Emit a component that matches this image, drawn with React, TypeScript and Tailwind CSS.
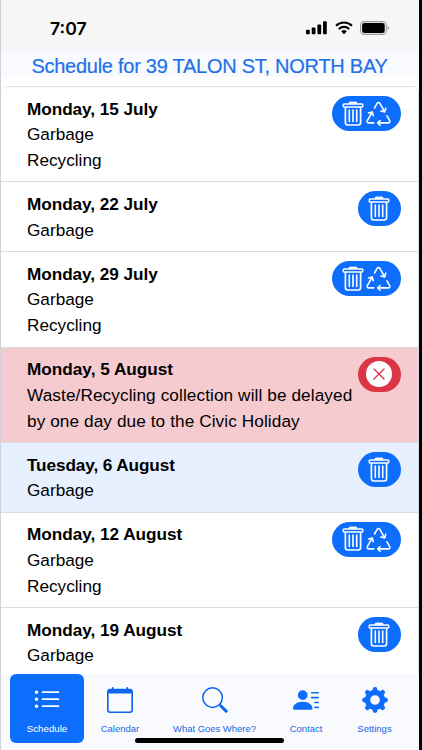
import { BsCalendar, BsListUl, BsPersonLinesFill, BsRecycle } from "react-icons/bs";

type Kind = "garbage" | "both" | "notice";
type Row = { date: string; lines: string[]; kind: Kind; bg: string; dateTrack: string; lineTrack: string };

const rows: Row[] = [
  { date: "Monday, 15 July", lines: ["Garbage", "Recycling"], kind: "both", bg: "bg-white", dateTrack: "tracking-[-0.05px]", lineTrack: "" },
  { date: "Monday, 22 July", lines: ["Garbage"], kind: "garbage", bg: "bg-white", dateTrack: "tracking-[-0.05px]", lineTrack: "" },
  { date: "Monday, 29 July", lines: ["Garbage", "Recycling"], kind: "both", bg: "bg-white", dateTrack: "tracking-[-0.05px]", lineTrack: "" },
  {
    date: "Monday, 5 August",
    lines: ["Waste/Recycling collection will be delayed", "by one day due to the Civic Holiday"],
    kind: "notice",
    bg: "bg-[#f5cbd0]",
    dateTrack: "",
    lineTrack: "tracking-[0.095px]",
  },
  { date: "Tuesday, 6 August", lines: ["Garbage"], kind: "garbage", bg: "bg-[#e6f0ff]", dateTrack: "tracking-[-0.11px]", lineTrack: "" },
  { date: "Monday, 12 August", lines: ["Garbage", "Recycling"], kind: "both", bg: "bg-white", dateTrack: "tracking-[-0.03px]", lineTrack: "" },
  { date: "Monday, 19 August", lines: ["Garbage"], kind: "garbage", bg: "bg-white", dateTrack: "tracking-[-0.03px]", lineTrack: "" },
];

function Trash() {
  return (
    <svg width="22" height="26" viewBox="0 0 22 26" fill="none" stroke="white" className="shrink-0">
      <rect x="1.2" y="2.9" width="19.6" height="3" rx="1" strokeWidth="1.5" />
      <path d="M7 2.6V2Q7 1 8 1h6q1 0 1 1v.6Z" fill="white" strokeWidth="0.8" />
      <path d="M3.4 6v15.6q0 2.4 2.4 2.4h10.4q2.4 0 2.4-2.4V6" strokeWidth="1.7" />
      <path d="M7.3 9v11.5M11 9v11.5M14.7 9v11.5" strokeWidth="1.6" strokeLinecap="round" />
    </svg>
  );
}

function Gear() {
  return (
    <svg width="26" height="26" viewBox="-13 -13 26 26" fill="none" stroke="currentColor">
      <circle r="7.5" strokeWidth="5.4" />
      <path
        d="M0-9V-10.5M0 9V10.5M-9 0H-10.5M9 0H10.5M6.4 6.4l1.2 1.2M-6.4-6.4l-1.2-1.2M6.4-6.4l1.2-1.2M-6.4 6.4l-1.2 1.2"
        strokeWidth="4.8"
        strokeLinecap="round"
      />
    </svg>
  );
}

function Magnifier() {
  return (
    <svg width="26" height="26" viewBox="0 0 26 26" fill="none" stroke="currentColor" strokeLinecap="round">
      <circle cx="10.6" cy="10.6" r="9.8" strokeWidth="1.5" />
      <path d="M17.8 17.8l1.8 1.8" strokeWidth="1.8" />
      <path d="M19.2 19.2l5 5" strokeWidth="3" />
    </svg>
  );
}

function Badge({ kind }: { kind: Kind }) {
  if (kind === "notice") {
    return (
      <div className="flex h-[35px] w-[43px] shrink-0 items-center justify-center rounded-full bg-[#dc3545]">
        <div className="flex size-[26px] items-center justify-center rounded-full bg-white text-[#dc3545]">
          <svg width="12" height="12" viewBox="0 0 12 12" stroke="currentColor" strokeWidth="1.4" strokeLinecap="round">
            <path d="M1 1l10 10M11 1L1 11" />
          </svg>
        </div>
      </div>
    );
  }
  return (
    <div
      className={`flex h-[35px] shrink-0 items-center rounded-full bg-[#0d6efd] pl-[10.5px] text-white ${
        kind === "both" ? "w-[69px] gap-[2px]" : "w-[43px]"
      }`}
    >
      <Trash />
      {kind === "both" && <BsRecycle className="size-[25px]" />}
    </div>
  );
}

function StatusBar() {
  return (
    <div className="flex h-[50px] shrink-0 items-center justify-between bg-[#f6f6f6] pr-[29px] pl-[49px]">
      <span className="mt-[7px] font-['Inter',sans-serif] text-[17.7px] leading-6 font-semibold">7:07</span>
      <div className="mt-[6px] flex items-center gap-[7px]">
        <svg width="23" height="14" viewBox="0 0 23 14" fill="black">
          <rect x="1" y="8.7" width="3.8" height="4.5" rx="1" />
          <rect x="6.7" y="6.5" width="3.8" height="6.7" rx="1" />
          <rect x="12.4" y="3.5" width="3.8" height="9.7" rx="1" />
          <rect x="18" y="0.3" width="3.8" height="12.9" rx="1" />
        </svg>
        <svg width="18" height="14" viewBox="0 0 18 14" fill="none" stroke="black" strokeWidth="2.1">
          <path d="M1 4.8a11.5 11.5 0 0 1 16 0M3.8 8a7.5 7.5 0 0 1 10.4 0" />
          <path d="M6.2 10.3a4.2 4.2 0 0 1 5.6 0L9 13.3Z" fill="black" stroke="none" />
        </svg>
        <svg width="30" height="14" viewBox="0 0 30 14">
          <rect x="0.6" y="0.6" width="25.6" height="12.8" rx="3.6" fill="none" stroke="#999" strokeWidth="1.1" />
          <rect x="2.1" y="2.1" width="22.6" height="9.8" rx="2.2" />
          <path d="M27.6 5v4q1.5-.6 1.5-2T27.6 5Z" fill="#999" />
        </svg>
      </div>
    </div>
  );
}

const tabLabel = "text-[9.5px] leading-[13px] whitespace-nowrap";

export default function App() {
  return (
    <div className="flex h-[750px] w-[422px] overflow-hidden bg-black pr-[3px] font-['Liberation_Sans',Arial,sans-serif] text-black">
      <div className="relative flex h-full w-full flex-col border-l border-[#cfd0d8] bg-white">
        <StatusBar />
        <h1 className="flex h-[27px] shrink-0 items-center justify-center bg-[#f8fafd] pt-[5px] pr-px text-[20px] leading-[26px] tracking-[-0.26px] whitespace-nowrap text-[#1f71e8] [-webkit-text-stroke:0.2px_#1f71e8]">
          Schedule for 39 TALON ST, NORTH BAY
        </h1>
        <div className="mt-[9px] min-h-0 flex-1 overflow-hidden rounded-t-[6px] border-t border-r border-[#dcdee8]">
          {rows.map((row) => (
            <div
              key={row.date}
              className={`flex items-start justify-between border-b border-[#dadce2] pt-[9px] pr-[17.5px] pb-[8px] pl-[26px] ${row.bg}`}
            >
              <div className="w-0 pt-[0.5px] text-[17.2px] leading-[25.6px] whitespace-nowrap">
                <p className={`font-bold ${row.dateTrack}`}>{row.date}</p>
                {row.lines.map((line, i) => (
                  <p key={line} className={`${row.lineTrack} ${i === row.lines.length - 1 ? "h-[25.6px]" : "h-[25.8px]"}`}>
                    {line}
                  </p>
                ))}
              </div>
              <Badge kind={row.kind} />
            </div>
          ))}
        </div>
        <nav className="flex h-[76px] shrink-0 items-start bg-[#f8fafd] pl-[9px] text-[#2268df]">
          <div className="flex h-[69px] w-[74px] flex-col items-center rounded-[6px] bg-[#0d6efd] text-white">
            <BsListUl className="mt-[12px] size-[28px]" />
            <span className="mt-[8px] text-[9.7px] leading-[13px] whitespace-nowrap">Schedule</span>
          </div>
          <div className="flex w-[72px] flex-col items-center pt-[13px]">
            <BsCalendar className="size-[26px] text-[#0d65e8]" />
            <span className={`mt-[9px] ${tabLabel}`}>Calendar</span>
          </div>
          <div className="flex w-[117px] flex-col items-center pt-[13px]">
            <div className="text-[#0d65e8]">
              <Magnifier />
            </div>
            <span className={`mt-[9px] tracking-[-0.04px] ${tabLabel}`}>What Goes Where?</span>
          </div>
          <div className="flex w-[66px] flex-col items-center pt-[13px]">
            <BsPersonLinesFill className="size-[26px] text-[#0d6efd]" />
            <span className={`mt-[9px] ${tabLabel}`}>Contact</span>
          </div>
          <div className="flex w-[71px] flex-col items-center pt-[13px]">
            <div className="text-[#0d6efd]">
              <Gear />
            </div>
            <span className={`mt-[9px] ${tabLabel}`}>Settings</span>
          </div>
        </nav>
        <div className="absolute bottom-[7px] left-[134px] h-[5px] w-[149px] rounded-full bg-black" />
      </div>
    </div>
  );
}
